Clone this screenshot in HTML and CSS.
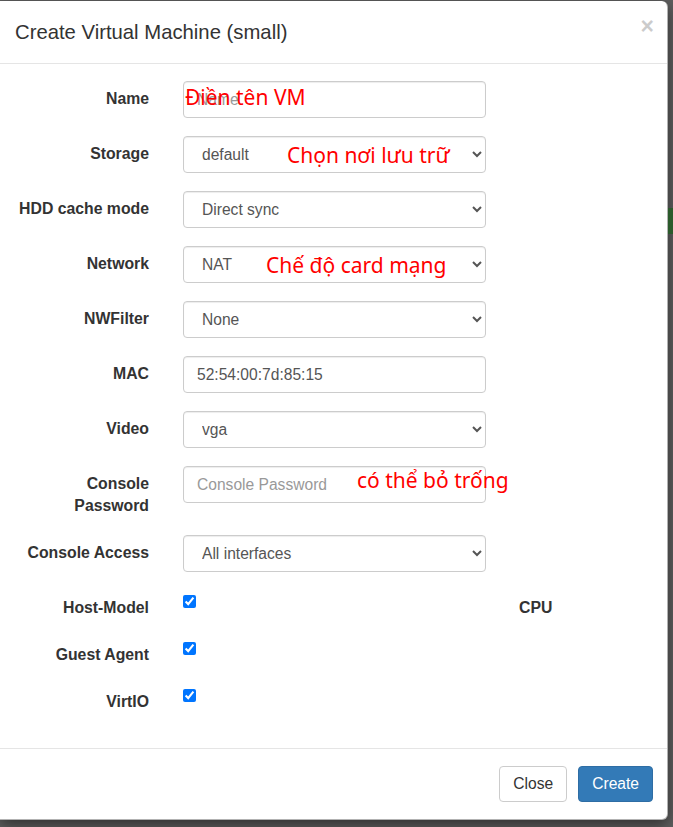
FILE: index.html
```html
<!DOCTYPE html>
<html lang="vi">
<head>
<meta charset="utf-8">
<title>Create Virtual Machine (small)</title>
<link rel="stylesheet" href="styles.css">
</head>
<body>
<div class="modal">
  <div class="modal-header">
    <h4 class="modal-title">Create Virtual Machine (small)</h4>
    <span class="close">&times;</span>
  </div>
  <div class="modal-body">
    <div class="form-row">
      <label class="lbl">Name</label>
      <div class="ctl"><input class="fc" type="text" placeholder="Name"><span class="note note-name">Điền tên VM</span></div>
    </div>
    <div class="form-row">
      <label class="lbl">Storage</label>
      <div class="ctl"><select class="fc"><option>default</option></select><span class="note note-storage">Chọn nơi lưu trữ</span></div>
    </div>
    <div class="form-row">
      <label class="lbl">HDD cache mode</label>
      <div class="ctl"><select class="fc"><option>Direct sync</option></select></div>
    </div>
    <div class="form-row">
      <label class="lbl">Network</label>
      <div class="ctl"><select class="fc"><option>NAT</option></select><span class="note note-network">Chế độ card mạng</span></div>
    </div>
    <div class="form-row">
      <label class="lbl">NWFilter</label>
      <div class="ctl"><select class="fc"><option>None</option></select></div>
    </div>
    <div class="form-row">
      <label class="lbl">MAC</label>
      <div class="ctl"><input class="fc" type="text" value="52:54:00:7d:85:15"></div>
    </div>
    <div class="form-row">
      <label class="lbl">Video</label>
      <div class="ctl"><select class="fc"><option>vga</option></select></div>
    </div>
    <div class="form-row">
      <label class="lbl">Console<br>Password</label>
      <div class="ctl"><input class="fc" type="text" placeholder="Console Password"><span class="note note-console">có thể bỏ trống</span></div>
    </div>
    <div class="form-row">
      <label class="lbl">Console Access</label>
      <div class="ctl"><select class="fc"><option>All interfaces</option></select></div>
    </div>
    <div class="form-row">
      <label class="lbl">Host-Model</label>
      <div class="ctl"><input class="cb" type="checkbox" checked></div>
      <label class="lbl lbl-left">CPU</label>
    </div>
    <div class="form-row">
      <label class="lbl">Guest Agent</label>
      <div class="ctl"><input class="cb" type="checkbox" checked></div>
    </div>
    <div class="form-row">
      <label class="lbl">VirtIO</label>
      <div class="ctl"><input class="cb" type="checkbox" checked></div>
    </div>
  </div>
  <div class="modal-footer">
    <button class="btn btn-default" type="button">Close</button>
    <button class="btn btn-primary" type="button">Create</button>
  </div>
</div>
<div class="backdrop-side">
  <div class="side-green"></div>
</div>
</body>
</html>
```
FILE: styles.css
```css
html, body {
  margin: 0;
  padding: 0;
}
body {
  background: #5f5f5f;
  padding-top: 1px;
  display: flex;
  align-items: flex-start;
  font-family: "Liberation Sans", Arial, sans-serif;
  font-size: 15.8px;
  color: #333;
  height: 826px;
  overflow: hidden;
}
.modal {
  width: 668px;
  flex: none;
  background: #fff;
  border: 1px solid rgba(0,0,0,.3);
  border-left: 0;
  border-top: 0;
  border-radius: 0 6px 6px 0;
  box-shadow: 0 5px 15px rgba(0,0,0,.5);
  box-sizing: border-box;
}
.modal-header {
  display: flex;
  align-items: center;
  justify-content: space-between;
  padding: 17px 13px 17px 15px;
  border-bottom: 1px solid #e5e5e5;
}
.modal-title {
  margin: 0;
  font-size: 20.3px;
  font-weight: normal;
  line-height: 28px;
  color: #333;
}
.close {
  font-size: 23px;
  font-weight: bold;
  line-height: 1;
  color: #000;
  opacity: .2;
  margin-top: -11px;
}
.modal-body {
  padding: 17px 0 17px 0;
}
.form-row {
  display: grid;
  grid-template-columns: 149px 303px auto;
  column-gap: 34px;
  margin-bottom: 18px;
  align-items: start;
}
.form-row .lbl-left {
  margin-left: -1px;
}
.lbl {
  text-align: right;
  font-weight: bold;
  padding-top: 7px;
  line-height: 22px;
  color: #333;
}
.lbl-left {
  text-align: left;
}
.ctl {
  position: relative;
}
.fc {
  display: block;
  width: 303px;
  height: 37px;
  box-sizing: border-box;
  padding: 6px 13px;
  font-family: "Liberation Sans", Arial, sans-serif;
  font-size: 15.6px;
  color: #555;
  background: #fff;
  border: 1px solid #ccc;
  border-radius: 4px;
  box-shadow: inset 0 1px 1px rgba(0,0,0,.075);
  margin: 0;
}
select.fc {
  padding-left: 14px;
  padding-right: 10px;
}
.fc::placeholder {
  color: #999;
}
.cb {
  margin: 5px 0 0 0;
  width: 13px;
  height: 13px;
  display: block;
}
.note {
  position: absolute;
  font-family: "Noto Sans", "Open Sans", sans-serif;
  font-size: 21px;
  line-height: 24px;
  color: #f00;
  white-space: nowrap;
  pointer-events: none;
}
.note-name { left: 2px; top: 4px; }
.note-storage { left: 104px; top: 7px; }
.note-network { left: 83px; top: 7px; }
.note-console { left: 174px; top: 2px; }
.modal-footer {
  display: flex;
  justify-content: flex-end;
  gap: 11px;
  padding: 17px 14px 17px 15px;
  border-top: 1px solid #e5e5e5;
}
.btn {
  height: 36px;
  padding: 0 13px;
  font-family: "Liberation Sans", Arial, sans-serif;
  font-size: 15.6px;
  line-height: 34px;
  border: 1px solid transparent;
  border-radius: 4px;
  cursor: pointer;
}
.btn-default {
  background: #fff;
  border-color: #ccc;
  color: #333;
}
.btn-primary {
  background: #337ab7;
  border-color: #2e6da4;
  color: #fff;
}
.backdrop-side {
  flex: 1;
  padding-top: 207px;
}
.side-green {
  height: 26px;
  background: #2b5a2b;
}
```
